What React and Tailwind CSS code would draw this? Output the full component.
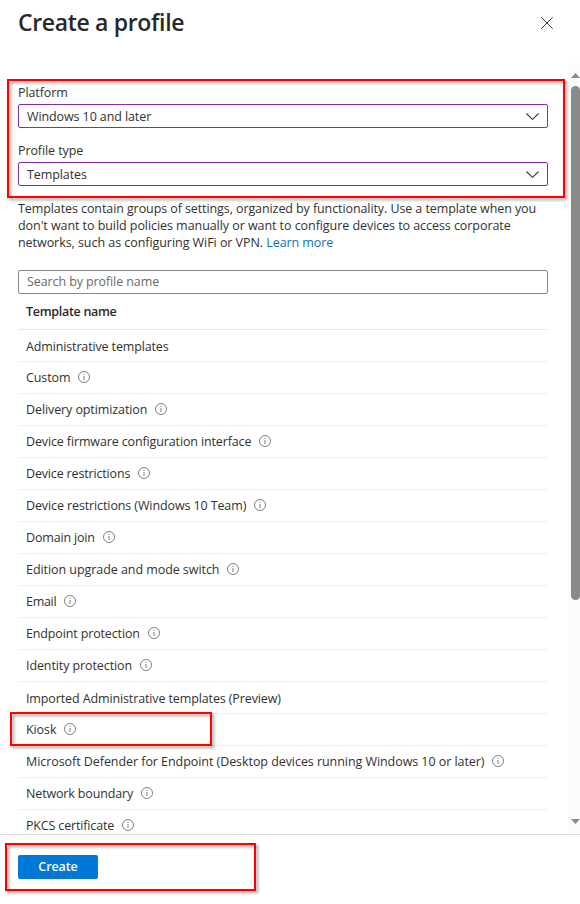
const templates = [
  { name: "Administrative templates", info: false, tracking: "tracking-[-0.14px]" },
  { name: "Custom", info: true },
  { name: "Delivery optimization", info: true },
  { name: "Device firmware configuration interface", info: true, tracking: "tracking-[-0.13px]" },
  { name: "Device restrictions", info: true, tracking: "tracking-[-0.16px]" },
  { name: "Device restrictions (Windows 10 Team)", info: true, tracking: "tracking-[-0.11px]" },
  { name: "Domain join", info: true, tracking: "tracking-[-0.17px]" },
  { name: "Edition upgrade and mode switch", info: true, tracking: "tracking-[-0.06px]" },
  { name: "Email", info: true, tracking: "tracking-[-0.3px]" },
  { name: "Endpoint protection", info: true, tracking: "tracking-[-0.14px]" },
  { name: "Identity protection", info: true },
  { name: "Imported Administrative templates (Preview)", info: false, tracking: "tracking-[-0.12px]" },
  { name: "Kiosk", info: true, highlighted: true },
  {
    name: "Microsoft Defender for Endpoint (Desktop devices running Windows 10 or later)",
    info: true,
    tracking: "tracking-[-0.06px]",
  },
  { name: "Network boundary", info: true, tracking: "tracking-[-0.15px]" },
  { name: "PKCS certificate", info: true, tracking: "tracking-[-0.16px]" },
];

const InfoIcon = () => (
  <svg className="mt-[9px] size-3 shrink-0" viewBox="0 0 12 12" fill="none">
    <circle cx="6" cy="6" r="5.5" stroke="#737373" strokeWidth="0.9" />
    <path d="M6 5v4M6 3v1.1" stroke="#8a8a8a" strokeWidth="1.1" />
  </svg>
);

const ChevronDown = () => (
  <svg className="h-[7px] w-[13px]" viewBox="0 0 13 7" fill="none">
    <path d="M0.4 0.5 6.5 6.4 12.6 0.5" stroke="#3b3a39" strokeWidth="1.05" />
  </svg>
);

const SelectField = ({ label, value }) => (
  <div>
    <div className="h-6 leading-[26px]">{label}</div>
    <button className="flex h-6 w-full items-center justify-between rounded-[2px] border border-[#8a2da5] bg-white pr-2 pl-2">
      <span className="leading-[18px] pt-[2px]">{value}</span>
      <ChevronDown />
    </button>
  </div>
);

// Red marker frame drawn over the content
const Highlight = ({ className }) => (
  <div
    className={`pointer-events-none absolute border-2 border-[#fe0000] drop-shadow-[2px_2px_1.5px_rgba(0,0,0,0.4)] ${className}`}
  />
);

const Scrollbar = () => (
  <div className="flex w-3 shrink-0 flex-col bg-[#fbfbfb] pt-[10px] pb-[10px] pl-[3px]">
    <svg className="h-[5px] w-[9px]" viewBox="0 0 9 5">
      <path d="M0 5 4.5 0 9 5Z" fill="#8a8a8a" />
    </svg>
    <div className="mt-2 h-[514px] w-[9px] rounded-full bg-[#8a8a8a]" />
    <svg className="mt-auto h-[5px] w-[9px]" viewBox="0 0 9 5">
      <path d="M0 0 4.5 5 9 0Z" fill="#8a8a8a" />
    </svg>
  </div>
);

const App = () => {
  return (
    <div className="flex h-[904px] w-[580px] flex-col overflow-hidden bg-white font-['Open_Sans','Noto_Sans',sans-serif] text-[12.5px] tracking-[-0.1px] text-[#323130]">
      {/* Header */}
      <div className="flex h-[63px] shrink-0 items-start justify-between pr-[27px] pl-[18px]">
        <h1 className="pt-[6px] text-[23px] leading-8 font-semibold tracking-[-0.33px] text-[#292827]">
          Create a profile
        </h1>
        <svg className="mt-[17px] size-3" viewBox="0 0 12 12" fill="none">
          <path d="M0.3 0.3 11.7 11.7M11.7 0.3 0.3 11.7" stroke="#3b3a39" strokeWidth="1" />
        </svg>
      </div>

      {/* Scrolling body */}
      <div className="relative flex h-[771px] shrink-0">
        <div className="h-full min-w-0 flex-1 overflow-hidden pt-[17px] pr-5 pl-[18px]">
          <div className="flex flex-col gap-[10px]">
            <SelectField label="Platform" value="Windows 10 and later" />
            <SelectField label="Profile type" value="Templates" />
          </div>

          <p className="mt-[14px] leading-[17px] tracking-[-0.09px] whitespace-nowrap">
            Templates contain groups of settings, organized by functionality. Use a template when you
            <br />
            <span className="tracking-[-0.06px]">
              don't want to build policies manually or want to configure devices to access corporate
            </span>
            <br />
            <span className="tracking-[-0.05px]">networks, such as configuring WiFi or VPN. </span>
            <a className="text-[#0b70c8]">Learn more</a>
          </p>

          <input
            placeholder="Search by profile name"
            className="mt-[19px] block h-6 w-full rounded-[2px] border border-[#8a8886] px-2 pb-[2px] tracking-[-0.1px] placeholder:text-[#6b6967]"
          />

          <div className="h-9 border-b border-[#e8e8e8] pl-2 leading-[35px] font-semibold tracking-[-0.3px] text-[#292827]">
            Template name
          </div>
          <ul>
            {templates.map((item) => (
              <li
                key={item.name}
                className="relative flex h-8 items-start gap-2 border-b border-[#efefef] pl-2"
              >
                <span
                  className={`whitespace-nowrap ${item.info ? "leading-[31px]" : "leading-[33px]"} ${item.tracking || ""}`}
                >
                  {item.name}
                </span>
                {item.info && <InfoIcon />}
                {item.highlighted && (
                  <Highlight className="top-[-2px] left-[-8px] h-[34px] w-[202px]" />
                )}
              </li>
            ))}
          </ul>
        </div>
        <Scrollbar />
        <Highlight className="top-4 left-[7px] h-[119px] w-[558px]" />
      </div>

      {/* Footer */}
      <div className="relative flex-1 border-t border-[#dcdcdc] pt-5 pl-[18px]">
        <button className="block h-6 w-20 rounded-[2px] bg-[#0078d7] text-[12.5px] font-semibold text-white">
          Create
        </button>
        <Highlight className="top-2 left-[5px] h-12 w-[251px]" />
      </div>
    </div>
  );
};

export default App;
